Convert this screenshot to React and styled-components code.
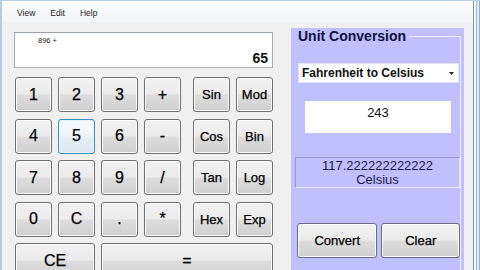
import styled, { createGlobalStyle, css } from "styled-components";

const Global = createGlobalStyle`
  html, body {
    margin: 0;
    padding: 0;
    width: 480px;
    height: 270px;
    overflow: hidden;
    background: #f0f0f0;
    font-family: "Liberation Sans", Arial, sans-serif;
  }
`;

const SWindow = styled.div`
  display: flex;
  width: 480px;
  height: 270px;
  box-sizing: border-box;
  border-top: 1px solid #b9cfe6;
  overflow: hidden;
`;

const SLeftFrame = styled.div`
  width: 2px;
  background: #b4cce6;
  flex: none;
`;

const SRightFrame = styled.div`
  width: 7px;
  flex: none;
  box-sizing: border-box;
  border-left: 1px solid #7d98b3;
  border-right: 1px solid #8fb0d0;
  background: linear-gradient(90deg, #f4f7fb 0 2px, #9fbad6 2px 3px, #dde8f4 3px);
`;

const SClient = styled.div`
  flex: 1;
  display: flex;
  flex-direction: column;
  min-width: 0;
`;

const SMenuBar = styled.div`
  flex: none;
  height: 21px;
  display: flex;
  align-items: center;
  padding-left: 15px;
  padding-top: 2px;
  box-sizing: border-box;
  background: linear-gradient(#fbfcfd, #f3f4f6);
  font-size: 8.5px;
  color: #1e1e1e;
`;

const SMenuItem = styled.span`
  margin-right: ${(p) => p.$gap}px;
`;

const SBody = styled.div`
  flex: 1;
  min-height: 0;
  display: flex;
  padding-left: 12px;
`;

const SLeftPane = styled.div`
  flex: none;
  display: flex;
  flex-direction: column;
  margin-top: 10px;
  width: 259px;
`;

const SDisplay = styled.div`
  flex: none;
  height: 36px;
  box-sizing: border-box;
  background: #fff;
  border: 1px solid #abadb3;
  border-top-color: #9aa0a8;
  display: flex;
  flex-direction: column;
  justify-content: space-between;
  padding: 3px 4px 1px 23px;
`;

const SExpression = styled.div`
  font-size: 7.5px;
  color: #222;
`;

const SResultValue = styled.div`
  align-self: flex-end;
  font-size: 14px;
  font-weight: 700;
  color: #111;
`;

const SKeypad = styled.div`
  flex: none;
  margin-top: 9px;
  margin-left: 1px;
  display: grid;
  grid-template-columns: 37px 37px 37px 37px 0px 37px 37px;
  grid-auto-rows: 35px;
  column-gap: 6px;
  row-gap: 6.5px;
`;

const buttonBase = css`
  box-sizing: border-box;
  border: 1px solid #707070;
  border-radius: 3px;
  box-shadow: inset 0 0 0 1px #fcfcfc;
  background: linear-gradient(#f2f2f2 0%, #ebebeb 48%, #dddddd 52%, #cfcfcf 100%);
  color: #000;
  font-family: "Liberation Sans", Arial, sans-serif;
  -webkit-text-stroke: 0.25px #000;
  padding: 0;
  display: flex;
  align-items: center;
  justify-content: center;
`;

const SKey = styled.button`
  ${buttonBase};
  font-size: ${(p) => (p.$fn ? 13 : 16)}px;
  grid-column: ${(p) => p.$col || "auto"};
  ${(p) =>
    p.$focused &&
    css`
      border-color: #3c8fb5;
      box-shadow: inset 0 0 0 1px #e8f4fa;
      background: linear-gradient(#f5fafd 0%, #eef5f9 48%, #e4eef4 52%, #dde9f0 100%);
    `}
`;

const SPanel = styled.div`
  flex: none;
  margin-top: 6px;
  margin-left: 18px;
  width: 173px;
  background: #c0c0ff;
  display: flex;
  flex-direction: column;
`;

const STitleRow = styled.div`
  display: flex;
  height: 16px;
  padding-left: 7px;
  &::after {
    content: "";
    flex: 1;
    align-self: flex-end;
    height: 7px;
    margin-left: 3px;
    margin-right: 3px;
    border-top: 1px solid #eeeeff;
    border-right: 1px solid #eeeeff;
  }
`;

const STitle = styled.span`
  font-size: 14px;
  font-weight: 700;
  color: #10103a;
  line-height: 16px;
`;

const SGroupBody = styled.div`
  flex: 1;
  margin-right: 3px;
  border-right: 1px solid #eeeeff;
  display: flex;
  flex-direction: column;
`;

const SSelect = styled.div`
  margin: 19px 1px 0 7px;
  height: 20px;
  box-sizing: border-box;
  background: #fff;
  border: 1px solid #e2e2ee;
  display: flex;
  align-items: center;
  justify-content: space-between;
  padding: 0 4px 0 3px;
  font-size: 12px;
  font-weight: 700;
  color: #111;
`;

const SInput = styled.div`
  margin: 18px 0 0 14px;
  width: 146px;
  height: 32px;
  box-sizing: border-box;
  background: #fff;
  text-align: center;
  font-size: 13px;
  padding-top: 4px;
  color: #111;
`;

const SOutput = styled.div`
  margin: 24px 0 0 4px;
  width: 165px;
  height: 31px;
  box-sizing: border-box;
  border: 1px solid;
  border-color: #9a9ac0 #e6e6ff #e6e6ff #9a9ac0;
  text-align: center;
  font-size: 13px;
  line-height: 14px;
  padding-top: 1px;
  color: #1a1a48;
`;

const SActions = styled.div`
  margin: 35px 0 0 6px;
  display: flex;
  gap: 4px;
`;

const SActionButton = styled.button`
  ${buttonBase};
  width: ${(p) => p.$w}px;
  height: 35px;
  font-size: 13px;
  border-color: #6c6c80;
`;

const keys = [
  ["1"], ["2"], ["3"], ["+"], null, ["Sin", true], ["Mod", true],
  ["4"], ["5", false, true], ["6"], ["-"], null, ["Cos", true], ["Bin", true],
  ["7"], ["8"], ["9"], ["/"], null, ["Tan", true], ["Log", true],
  ["0"], ["C"], ["."], ["*"], null, ["Hex", true], ["Exp", true],
];

const App = () => {
  return (
    <>
      <Global />
      <SWindow>
        <SLeftFrame />
        <SClient>
          <SMenuBar>
            <SMenuItem $gap={15}>View</SMenuItem>
            <SMenuItem $gap={15}>Edit</SMenuItem>
            <SMenuItem $gap={0}>Help</SMenuItem>
          </SMenuBar>
          <SBody>
            <SLeftPane>
              <SDisplay>
                <SExpression>896 +</SExpression>
                <SResultValue>65</SResultValue>
              </SDisplay>
              <SKeypad>
                {keys.map((k, i) =>
                  k ? (
                    <SKey key={i} $fn={k[1]} $focused={k[2]}>
                      {k[0]}
                    </SKey>
                  ) : (
                    <span key={i} />
                  )
                )}
                <SKey $col="1 / span 2">CE</SKey>
                <SKey $col="3 / span 5">=</SKey>
              </SKeypad>
            </SLeftPane>
            <SPanel>
              <STitleRow>
                <STitle>Unit Conversion</STitle>
              </STitleRow>
              <SGroupBody>
                <SSelect>
                  <span>Fahrenheit to Celsius</span>
                  <svg width="5" height="3" viewBox="0 0 5 3">
                    <path d="M0 0h5L2.5 3z" fill="#222" />
                  </svg>
                </SSelect>
                <SInput>243</SInput>
                <SOutput>
                  117.222222222222
                  <br />
                  Celsius
                </SOutput>
                <SActions>
                  <SActionButton $w={82}>Convert</SActionButton>
                  <SActionButton $w={80}>Clear</SActionButton>
                </SActions>
              </SGroupBody>
            </SPanel>
          </SBody>
        </SClient>
        <SRightFrame />
      </SWindow>
    </>
  );
};

export default App;
